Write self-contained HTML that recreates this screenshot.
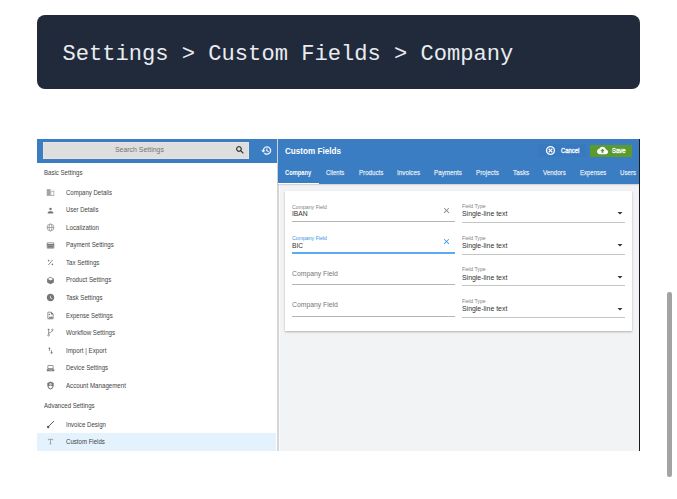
<!DOCTYPE html>
<html><head><meta charset="utf-8">
<style>
*{margin:0;padding:0;box-sizing:border-box}
html,body{width:677px;height:499px;background:#fff;overflow:hidden;font-family:"Liberation Sans",sans-serif}
body{position:relative}
body>div,body>svg{position:absolute}
.t{white-space:pre}
</style></head><body>
<div style="left:37.00px;top:15.00px;width:603.00px;height:74.00px;background:#212a3a;border-radius:8px"></div>
<div class="t" style="left:62.50px;top:45.15px;line-height:20px;font-size:22.1px;color:#e9ecf1;font-weight:400;font-family:'Liberation Mono';">Settings &gt; Custom Fields &gt; Company</div>
<div style="left:37.00px;top:139.00px;width:240.00px;height:311.60px;background:#fff;"></div>
<div style="left:277.00px;top:139.00px;width:1.60px;height:311.60px;background:#d6d6d6;"></div>
<div style="left:278.60px;top:139.00px;width:360.40px;height:311.60px;background:#f2f3f5;"></div>
<div style="left:278.60px;top:183.90px;width:1.10px;height:266.70px;background:#fafafa;"></div>
<div style="left:37.00px;top:139.00px;width:240.00px;height:23.50px;background:#3b7dc2;"></div>
<div style="left:278.30px;top:139.00px;width:360.70px;height:44.90px;background:#3b7dc2;box-shadow:0 0.6px 1.2px rgba(0,0,0,.15)"></div>
<div style="left:42.50px;top:142.00px;width:206.50px;height:17.00px;background:#dedede;box-shadow:inset 0 0 0 0.6px #f1e4da"></div>
<div class="t" style="left:114.60px;top:140.48px;line-height:20px;font-size:6.9px;color:#737373;font-weight:400;font-family:'Liberation Sans';transform:scaleX(1.0039);transform-origin:0 50%;">Search Settings</div>
<svg style="left:234.60px;top:144.90px;width:10px;height:10px;fill:#222;color:#222;stroke:#222;stroke-width:0.6;" viewBox="0 0 24 24"><path d="M15.5 14h-.79l-.28-.27C15.41 12.59 16 11.11 16 9.5 16 5.91 13.09 3 9.5 3S3 5.91 3 9.5 5.91 16 9.5 16c1.61 0 3.09-.59 4.23-1.57l.27.28v.79l5 4.99L20.49 19l-4.99-5zm-6 0C7.01 14 5 11.99 5 9.5S7.01 5 9.5 5 14 7.01 14 9.5 11.99 14 9.5 14z"/></svg>
<svg style="left:261.40px;top:144.80px;width:11px;height:11px;fill:#fff;color:#fff;stroke:#fff;stroke-width:0.7;" viewBox="0 0 24 24"><path d="M13 3c-4.97 0-9 4.03-9 9H1l3.89 3.89.07.14L9 12H6c0-3.87 3.13-7 7-7s7 3.13 7 7-3.13 7-7 7c-1.93 0-3.68-.79-4.94-2.06l-1.42 1.42C8.27 19.99 10.51 21 13 21c4.97 0 9-4.03 9-9s-4.03-9-9-9zm-1 5v5l4.28 2.54.72-1.21-3.5-2.08V8H12z"/></svg>
<div class="t" style="left:44.30px;top:163.48px;line-height:20px;font-size:6.9px;color:#444;font-weight:400;font-family:'Liberation Sans';transform:scaleX(0.8828);transform-origin:0 50%;">Basic Settings</div>
<div style="left:37.00px;top:432.80px;width:239.20px;height:18.00px;background:#e3f2fd;"></div>
<svg style="left:45.90px;top:188.00px;width:9px;height:9px;fill:#a3a3a3;color:#a3a3a3;" viewBox="0 0 24 24"><rect x="2" y="3" width="10" height="18"/><path d="M12 7h10v14H12zm2 2v10h6V9z"/></svg>
<div class="t" style="left:65.90px;top:182.58px;line-height:20px;font-size:6.9px;color:#444;font-weight:400;font-family:'Liberation Sans';transform:scaleX(0.8755);transform-origin:0 50%;">Company Details</div>
<svg style="left:45.90px;top:205.56px;width:9px;height:9px;fill:#777;color:#777;" viewBox="0 0 24 24"><circle cx="12" cy="8" r="3.3"/><path d="M12 14c-2.9 0-7.5 1.3-7.5 3.8V20h15v-2.2c0-2.5-4.6-3.8-7.5-3.8z"/></svg>
<div class="t" style="left:65.90px;top:200.14px;line-height:20px;font-size:6.9px;color:#444;font-weight:400;font-family:'Liberation Sans';transform:scaleX(0.8622);transform-origin:0 50%;">User Details</div>
<svg style="left:45.90px;top:223.12px;width:9px;height:9px;fill:#777;color:#777;" viewBox="0 0 24 24"><g fill="none" stroke="currentColor" stroke-width="1.6"><circle cx="12" cy="12" r="9.2"/><ellipse cx="12" cy="12" rx="3.8" ry="9.2"/><path d="M3 12h18"/></g></svg>
<div class="t" style="left:65.90px;top:217.70px;line-height:20px;font-size:6.9px;color:#444;font-weight:400;font-family:'Liberation Sans';transform:scaleX(0.9056);transform-origin:0 50%;">Localization</div>
<svg style="left:45.90px;top:240.68px;width:9px;height:9px;fill:#777;color:#777;" viewBox="0 0 24 24"><path d="M20 4H4c-1.11 0-2 .89-2 2v12c0 1.11.89 2 2 2h16c1.11 0 2-.89 2-2V6c0-1.11-.89-2-2-2zm0 14H4v-6h16v6zm0-10H4V6h16v2z"/><rect x="4" y="12" width="16" height="6"/></svg>
<div class="t" style="left:65.90px;top:235.26px;line-height:20px;font-size:6.9px;color:#444;font-weight:400;font-family:'Liberation Sans';transform:scaleX(0.8839);transform-origin:0 50%;">Payment Settings</div>
<svg style="left:45.90px;top:258.24px;width:9px;height:9px;fill:#777;color:#777;" viewBox="0 0 24 24"><g fill="none" stroke="currentColor" stroke-width="2.2"><path d="M18 5L6 19"/></g><circle cx="7" cy="7" r="2.2"/><circle cx="17" cy="17" r="2.2"/></svg>
<div class="t" style="left:65.90px;top:252.82px;line-height:20px;font-size:6.9px;color:#444;font-weight:400;font-family:'Liberation Sans';transform:scaleX(0.8886);transform-origin:0 50%;">Tax Settings</div>
<svg style="left:45.90px;top:275.80px;width:9px;height:9px;fill:#777;color:#777;" viewBox="0 0 24 24"><path d="M12 2L3 7v10l9 5 9-5V7l-9-5zm0 2.3L18.7 8 12 11.7 5.3 8 12 4.3z"/></svg>
<div class="t" style="left:65.90px;top:270.38px;line-height:20px;font-size:6.9px;color:#444;font-weight:400;font-family:'Liberation Sans';transform:scaleX(0.8947);transform-origin:0 50%;">Product Settings</div>
<svg style="left:45.90px;top:293.36px;width:9px;height:9px;fill:#777;color:#777;" viewBox="0 0 24 24"><path d="M12 2C6.5 2 2 6.5 2 12s4.5 10 10 10 10-4.5 10-10S17.5 2 12 2zm4.2 14.2L11 13V7h1.5v5.2l4.5 2.7-.8 1.3z"/></svg>
<div class="t" style="left:65.90px;top:287.94px;line-height:20px;font-size:6.9px;color:#444;font-weight:400;font-family:'Liberation Sans';transform:scaleX(0.8919);transform-origin:0 50%;">Task Settings</div>
<svg style="left:45.90px;top:310.92px;width:9px;height:9px;fill:#777;color:#777;" viewBox="0 0 24 24"><path d="M14 2H6c-1.1 0-2 .9-2 2v16c0 1.1.9 2 2 2h12c1.1 0 2-.9 2-2V8l-6-6zm4 18H6V4h7v5h5v11z"/><path d="M6 20l4.5-6 2.5 3 2.5-3.5L18 17v3z"/><circle cx="9" cy="9" r="2"/></svg>
<div class="t" style="left:65.90px;top:305.50px;line-height:20px;font-size:6.9px;color:#444;font-weight:400;font-family:'Liberation Sans';transform:scaleX(0.8696);transform-origin:0 50%;">Expense Settings</div>
<svg style="left:45.90px;top:328.48px;width:9px;height:9px;fill:#777;color:#777;" viewBox="0 0 24 24"><g fill="none" stroke="currentColor" stroke-width="2"><path d="M7 4v12"/><circle cx="7" cy="19" r="2.3"/><path d="M7 15c0-4 10-3 10-8"/><circle cx="17" cy="5" r="2"/></g><path d="M7 1.5l-3.5 4h7z"/></svg>
<div class="t" style="left:65.90px;top:323.06px;line-height:20px;font-size:6.9px;color:#444;font-weight:400;font-family:'Liberation Sans';transform:scaleX(0.8912);transform-origin:0 50%;">Workflow Settings</div>
<svg style="left:45.90px;top:346.04px;width:9px;height:9px;fill:#777;color:#777;" viewBox="0 0 24 24"><path d="M16 17.01V11h-2v6.01h-3L15 21l4-3.99h-3zM9 3L5 6.99h3V13h2V6.99h3L9 3z"/></svg>
<div class="t" style="left:65.90px;top:340.62px;line-height:20px;font-size:6.9px;color:#444;font-weight:400;font-family:'Liberation Sans';transform:scaleX(0.8953);transform-origin:0 50%;">Import | Export</div>
<svg style="left:45.90px;top:363.60px;width:9px;height:9px;fill:#777;color:#777;" viewBox="0 0 24 24"><path d="M6 3h12c1.1 0 2 .9 2 2v8H4V5c0-1.1.9-2 2-2zm0 2v6h12V5H6z"/><path d="M2 14h20v4c0 .6-.4 1-1 1H3c-.6 0-1-.4-1-1z"/><path fill="#fff" d="M10 15.8h2v1.4h-2zM14 15.8h2v1.4h-2z"/></svg>
<div class="t" style="left:65.90px;top:358.18px;line-height:20px;font-size:6.9px;color:#444;font-weight:400;font-family:'Liberation Sans';transform:scaleX(0.8782);transform-origin:0 50%;">Device Settings</div>
<svg style="left:45.90px;top:381.16px;width:9px;height:9px;fill:#777;color:#777;" viewBox="0 0 24 24"><path d="M12 1.5L3.5 5v6c0 5.3 3.6 10.2 8.5 11.5 4.9-1.3 8.5-6.2 8.5-11.5V5L12 1.5z"/><circle cx="12" cy="9" r="2.8" fill="#fff"/><path fill="#fff" d="M6.3 15.2c1.3-1.7 3.4-2.6 5.7-2.6s4.4.9 5.7 2.6c-1.3 2.3-3.3 4-5.7 4.8-2.4-.8-4.4-2.5-5.7-4.8z"/><circle cx="12" cy="9" r="1.3"/></svg>
<div class="t" style="left:65.90px;top:375.74px;line-height:20px;font-size:6.9px;color:#444;font-weight:400;font-family:'Liberation Sans';transform:scaleX(0.8939);transform-origin:0 50%;">Account Management</div>
<div class="t" style="left:44.40px;top:395.58px;line-height:20px;font-size:6.9px;color:#444;font-weight:400;font-family:'Liberation Sans';transform:scaleX(0.8811);transform-origin:0 50%;">Advanced Settings</div>
<svg style="left:45.90px;top:420.20px;width:9px;height:9px;fill:#555;color:#555;" viewBox="0 0 24 24"><g fill="none" stroke="currentColor" stroke-width="2.6" stroke-linecap="round"><path d="M20.5 3.5L9 15"/></g><circle cx="5.8" cy="18.5" r="3.2"/></svg>
<div class="t" style="left:65.90px;top:414.68px;line-height:20px;font-size:6.9px;color:#444;font-weight:400;font-family:'Liberation Sans';transform:scaleX(0.8838);transform-origin:0 50%;">Invoice Design</div>
<svg style="left:46.80px;top:438.40px;width:7px;height:7px;fill:#666;color:#666;" viewBox="0 0 24 24"><g fill="none" stroke="currentColor" stroke-width="1.8"><path d="M4.5 8V4.5h15V8M12 4.5v16M9 20.5h6"/></g></svg>
<div class="t" style="left:65.90px;top:432.38px;line-height:20px;font-size:6.9px;color:#444;font-weight:400;font-family:'Liberation Sans';transform:scaleX(0.8822);transform-origin:0 50%;">Custom Fields</div>
<div class="t" style="left:284.90px;top:140.90px;line-height:20px;font-size:8.7px;color:#fff;font-weight:700;font-family:'Liberation Sans';transform:scaleX(0.9343);transform-origin:0 50%;">Custom Fields</div>
<div class="t" style="left:284.80px;top:162.88px;line-height:20px;font-size:6.7px;color:#fff;font-weight:700;font-family:'Liberation Sans';transform:scaleX(0.8583);transform-origin:0 50%;">Company</div>
<div class="t" style="left:325.50px;top:162.88px;line-height:20px;font-size:7.0px;color:rgba(255,255,255,.78);font-weight:400;font-family:'Liberation Sans';transform:scaleX(0.8553);transform-origin:0 50%;-webkit-text-stroke:0.25px rgba(255,255,255,.78);">Clients</div>
<div class="t" style="left:358.60px;top:162.88px;line-height:20px;font-size:7.0px;color:rgba(255,255,255,.78);font-weight:400;font-family:'Liberation Sans';transform:scaleX(0.8833);transform-origin:0 50%;-webkit-text-stroke:0.25px rgba(255,255,255,.78);">Products</div>
<div class="t" style="left:397.30px;top:162.88px;line-height:20px;font-size:7.0px;color:rgba(255,255,255,.78);font-weight:400;font-family:'Liberation Sans';transform:scaleX(0.8995);transform-origin:0 50%;-webkit-text-stroke:0.25px rgba(255,255,255,.78);">Invoices</div>
<div class="t" style="left:434.00px;top:162.88px;line-height:20px;font-size:7.0px;color:rgba(255,255,255,.78);font-weight:400;font-family:'Liberation Sans';transform:scaleX(0.8964);transform-origin:0 50%;-webkit-text-stroke:0.25px rgba(255,255,255,.78);">Payments</div>
<div class="t" style="left:475.80px;top:162.88px;line-height:20px;font-size:7.0px;color:rgba(255,255,255,.78);font-weight:400;font-family:'Liberation Sans';transform:scaleX(0.9017);transform-origin:0 50%;-webkit-text-stroke:0.25px rgba(255,255,255,.78);">Projects</div>
<div class="t" style="left:513.00px;top:162.88px;line-height:20px;font-size:7.0px;color:rgba(255,255,255,.78);font-weight:400;font-family:'Liberation Sans';transform:scaleX(0.9109);transform-origin:0 50%;-webkit-text-stroke:0.25px rgba(255,255,255,.78);">Tasks</div>
<div class="t" style="left:543.20px;top:162.88px;line-height:20px;font-size:7.0px;color:rgba(255,255,255,.78);font-weight:400;font-family:'Liberation Sans';transform:scaleX(0.8857);transform-origin:0 50%;-webkit-text-stroke:0.25px rgba(255,255,255,.78);">Vendors</div>
<div class="t" style="left:579.70px;top:162.88px;line-height:20px;font-size:7.0px;color:rgba(255,255,255,.78);font-weight:400;font-family:'Liberation Sans';transform:scaleX(0.8555);transform-origin:0 50%;-webkit-text-stroke:0.25px rgba(255,255,255,.78);">Expenses</div>
<div class="t" style="left:620.30px;top:162.88px;line-height:20px;font-size:7.0px;color:rgba(255,255,255,.78);font-weight:400;font-family:'Liberation Sans';transform:scaleX(0.8753);transform-origin:0 50%;-webkit-text-stroke:0.25px rgba(255,255,255,.78);">Users</div>
<div style="left:278.30px;top:182.90px;width:40.50px;height:1.00px;background:#fff;"></div>
<div style="left:537.80px;top:144.10px;width:48.50px;height:13.10px;background:#3979bf;"></div>
<svg style="left:545.4px;top:144.8px;width:11px;height:11px" viewBox="0 0 24 24"><g fill="none" stroke="#fff" stroke-width="2.9"><circle cx="12" cy="12" r="8.6"/><path d="M7.9 7.9l8.2 8.2M16.1 7.9l-8.2 8.2"/></g></svg>
<div class="t" style="left:560.60px;top:140.78px;line-height:20px;font-size:7.0px;color:#fff;font-weight:400;font-family:'Liberation Sans';transform:scaleX(0.8444);transform-origin:0 50%;-webkit-text-stroke:0.3px #fff;">Cancel</div>
<div style="left:590.30px;top:144.70px;width:41.60px;height:11.90px;background:#5b9a2f;"></div>
<svg style="left:596.5px;top:145.1px;width:11px;height:11px" viewBox="0 0 24 24"><path fill="#fff" d="M19.35 10.04C18.67 6.59 15.64 4 12 4 9.11 4 6.6 5.64 5.35 8.04 2.34 8.36 0 10.91 0 14c0 3.31 2.69 6 6 6h13c2.76 0 5-2.24 5-5 0-2.64-2.05-4.78-4.65-4.96z"/><path fill="#5b9a2f" d="M14 13v4h-4v-4H7l5-5 5 5h-3z"/></svg>
<div class="t" style="left:611.50px;top:140.78px;line-height:20px;font-size:7.0px;color:#fff;font-weight:400;font-family:'Liberation Sans';transform:scaleX(0.8461);transform-origin:0 50%;-webkit-text-stroke:0.3px #fff;">Save</div>
<div style="left:284.50px;top:190.70px;width:347.50px;height:140.30px;background:#fff;box-shadow:0 0.8px 2px rgba(0,0,0,.28)"></div>
<div class="t" style="left:292.20px;top:196.57px;line-height:20px;font-size:5.8px;color:#808080;font-weight:400;font-family:'Liberation Sans';transform:scaleX(0.8947);transform-origin:0 50%;">Company Field</div>
<div class="t" style="left:292.20px;top:203.88px;line-height:20px;font-size:6.9px;color:#333;font-weight:400;font-family:'Liberation Sans';transform:scaleX(0.9749);transform-origin:0 50%;">IBAN</div>
<svg style="left:441.70px;top:205.50px;width:9px;height:9px;fill:#7a7a7a;color:#7a7a7a;" viewBox="0 0 24 24"><path d="M19 6.41L17.59 5 12 10.59 6.41 5 5 6.41 10.59 12 5 17.59 6.41 19 12 13.41 17.59 19 19 17.59 13.41 12z"/></svg>
<div style="left:292.30px;top:220.70px;width:162.80px;height:1.00px;background:#b5b5b5;"></div>
<div class="t" style="left:462.20px;top:195.87px;line-height:20px;font-size:5.8px;color:#808080;font-weight:400;font-family:'Liberation Sans';transform:scaleX(0.8855);transform-origin:0 50%;">Field Type</div>
<div class="t" style="left:462.20px;top:204.08px;line-height:20px;font-size:7.0px;color:#333;font-weight:400;font-family:'Liberation Sans';transform:scaleX(0.9866);transform-origin:0 50%;">Single-line text</div>
<div style="left:462.20px;top:221.80px;width:163.00px;height:1.00px;background:#c4c4c4;"></div>
<svg style="left:613.80px;top:207.30px;width:12px;height:12px;fill:#333;color:#333;" viewBox="0 0 24 24"><path d="M7 10l5 5 5-5z"/></svg>
<div class="t" style="left:292.20px;top:227.87px;line-height:20px;font-size:5.8px;color:#3a91e4;font-weight:400;font-family:'Liberation Sans';transform:scaleX(0.8947);transform-origin:0 50%;">Company Field</div>
<div class="t" style="left:292.20px;top:235.63px;line-height:20px;font-size:6.9px;color:#333;font-weight:400;font-family:'Liberation Sans';transform:scaleX(0.965);transform-origin:0 50%;">BIC</div>
<svg style="left:441.70px;top:237.25px;width:9px;height:9px;fill:#2a8fe8;color:#2a8fe8;" viewBox="0 0 24 24"><path d="M19 6.41L17.59 5 12 10.59 6.41 5 5 6.41 10.59 12 5 17.59 6.41 19 12 13.41 17.59 19 19 17.59 13.41 12z"/></svg>
<div style="left:292.30px;top:252.00px;width:162.80px;height:1.90px;background:#5eaaf0;"></div>
<div class="t" style="left:462.20px;top:227.62px;line-height:20px;font-size:5.8px;color:#808080;font-weight:400;font-family:'Liberation Sans';transform:scaleX(0.8855);transform-origin:0 50%;">Field Type</div>
<div class="t" style="left:462.20px;top:235.83px;line-height:20px;font-size:7.0px;color:#333;font-weight:400;font-family:'Liberation Sans';transform:scaleX(0.9866);transform-origin:0 50%;">Single-line text</div>
<div style="left:462.20px;top:253.55px;width:163.00px;height:1.00px;background:#c4c4c4;"></div>
<svg style="left:613.80px;top:239.05px;width:12px;height:12px;fill:#333;color:#333;" viewBox="0 0 24 24"><path d="M7 10l5 5 5-5z"/></svg>
<div class="t" style="left:292.40px;top:263.58px;line-height:20px;font-size:7.0px;color:#777;font-weight:400;font-family:'Liberation Sans';transform:scaleX(0.975);transform-origin:0 50%;">Company Field</div>
<div style="left:292.30px;top:284.20px;width:162.80px;height:1.00px;background:#b5b5b5;"></div>
<div class="t" style="left:462.20px;top:259.37px;line-height:20px;font-size:5.8px;color:#808080;font-weight:400;font-family:'Liberation Sans';transform:scaleX(0.8855);transform-origin:0 50%;">Field Type</div>
<div class="t" style="left:462.20px;top:267.58px;line-height:20px;font-size:7.0px;color:#333;font-weight:400;font-family:'Liberation Sans';transform:scaleX(0.9866);transform-origin:0 50%;">Single-line text</div>
<div style="left:462.20px;top:285.30px;width:163.00px;height:1.00px;background:#c4c4c4;"></div>
<svg style="left:613.80px;top:270.80px;width:12px;height:12px;fill:#333;color:#333;" viewBox="0 0 24 24"><path d="M7 10l5 5 5-5z"/></svg>
<div class="t" style="left:292.40px;top:295.33px;line-height:20px;font-size:7.0px;color:#777;font-weight:400;font-family:'Liberation Sans';transform:scaleX(0.975);transform-origin:0 50%;">Company Field</div>
<div style="left:292.30px;top:315.95px;width:162.80px;height:1.00px;background:#b5b5b5;"></div>
<div class="t" style="left:462.20px;top:291.12px;line-height:20px;font-size:5.8px;color:#808080;font-weight:400;font-family:'Liberation Sans';transform:scaleX(0.8855);transform-origin:0 50%;">Field Type</div>
<div class="t" style="left:462.20px;top:299.33px;line-height:20px;font-size:7.0px;color:#333;font-weight:400;font-family:'Liberation Sans';transform:scaleX(0.9866);transform-origin:0 50%;">Single-line text</div>
<div style="left:462.20px;top:317.05px;width:163.00px;height:1.00px;background:#c4c4c4;"></div>
<svg style="left:613.80px;top:302.55px;width:12px;height:12px;fill:#333;color:#333;" viewBox="0 0 24 24"><path d="M7 10l5 5 5-5z"/></svg>
<div style="left:640.00px;top:139.00px;width:27.00px;height:45.00px;background:#fff;"></div>
<div style="left:639.00px;top:139.00px;width:1.00px;height:312.00px;background:#1a1a1a;"></div>
<div style="left:667.40px;top:292.30px;width:4.40px;height:184.70px;background:#a3a3a3;border-radius:2.2px"></div>
</body></html>
